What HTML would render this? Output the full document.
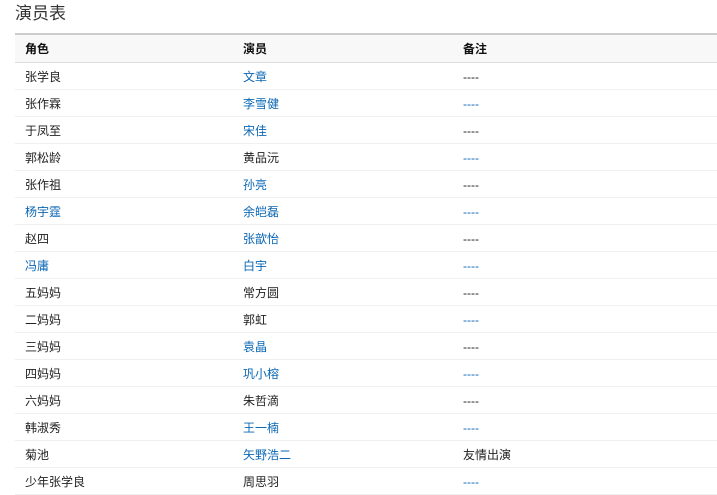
<!DOCTYPE html>
<html><head><meta charset="utf-8"><style>
body{margin:0;width:717px;height:494px;overflow:hidden;background:#fff;font-family:"Liberation Sans","Noto Sans CJK SC",sans-serif;font-size:12px;color:#222}
h2{position:absolute;left:15px;top:3px;margin:0;font-weight:normal;font-size:17px;color:#333;line-height:22px}
table{position:absolute;left:15px;top:33px;width:710px;border-collapse:collapse;border-top:2px solid #ccc}
th{background:#f8f8f8;text-align:left;font-weight:bold;height:27px;padding:0 0 0 10px;border-bottom:1px solid #ddd;color:#111}
td{height:25px;padding:1px 0 0 10px;border-bottom:1px solid #f0f0f0}
.c1{width:208px}.c2{width:210px}
a{color:#0b67b5;text-decoration:none}
</style></head><body>
<h2>演员表</h2>
<table>
<tr><th class="c1">角色</th><th class="c2">演员</th><th>备注</th></tr>
<tr><td>张学良</td><td><a>文章</a></td><td>----</td></tr>
<tr><td>张作霖</td><td><a>李雪健</a></td><td><a>----</a></td></tr>
<tr><td>于凤至</td><td><a>宋佳</a></td><td>----</td></tr>
<tr><td>郭松龄</td><td>黄品沅</td><td><a>----</a></td></tr>
<tr><td>张作祖</td><td><a>孙亮</a></td><td>----</td></tr>
<tr><td><a>杨宇霆</a></td><td><a>余皑磊</a></td><td><a>----</a></td></tr>
<tr><td>赵四</td><td><a>张歆怡</a></td><td>----</td></tr>
<tr><td><a>冯庸</a></td><td><a>白宇</a></td><td><a>----</a></td></tr>
<tr><td>五妈妈</td><td>常方圆</td><td>----</td></tr>
<tr><td>二妈妈</td><td>郭虹</td><td><a>----</a></td></tr>
<tr><td>三妈妈</td><td><a>袁晶</a></td><td>----</td></tr>
<tr><td>四妈妈</td><td><a>巩小榕</a></td><td><a>----</a></td></tr>
<tr><td>六妈妈</td><td>朱哲滴</td><td>----</td></tr>
<tr><td>韩淑秀</td><td><a>王一楠</a></td><td><a>----</a></td></tr>
<tr><td>菊池</td><td><a>矢野浩二</a></td><td>友情出演</td></tr>
<tr><td>少年张学良</td><td>周思羽</td><td><a>----</a></td></tr>
</table>
</body></html>
